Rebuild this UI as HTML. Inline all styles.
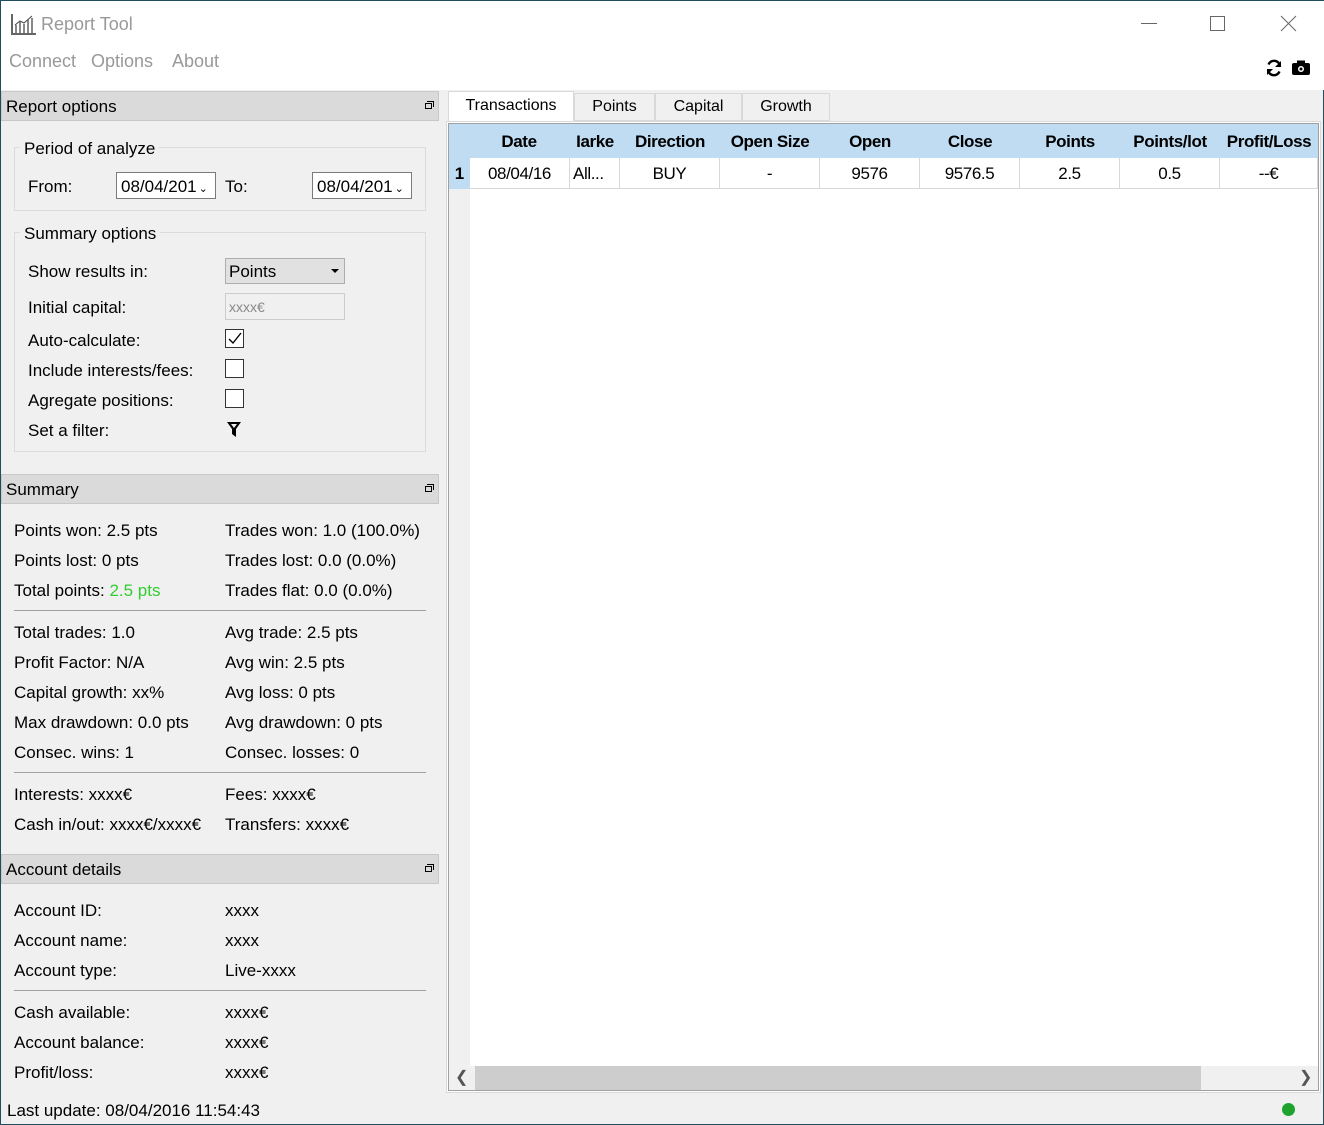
<!DOCTYPE html>
<html><head><style>
*{margin:0;padding:0;box-sizing:border-box}
body{width:1324px;height:1125px;background:#f0f0f0;font-family:"Liberation Sans",sans-serif;font-size:17px;color:#000;position:relative;overflow:hidden;border:1px solid #1f4f5f}
.a{position:absolute;white-space:nowrap}
.hdr{position:absolute;left:0px;width:438px;height:30px;background:#dadada;border:1px solid #c8c8c8}
.hdr span{position:absolute;left:4px;top:5px}
.hdr i{position:absolute;right:6px;top:11px;width:7px;height:6px;border:1.5px solid #000}
.hdr b{position:absolute;right:4px;top:9px;width:7px;height:6px;border-top:1.5px solid #000;border-right:1.5px solid #000}
.grp{position:absolute;left:13px;width:412px;border:1px solid #dcdcdc}
.cb{position:absolute;width:19px;height:19px;border:1px solid #333;background:#fff}
.hr{position:absolute;left:13px;width:412px;height:1px;background:#a0a0a0}
.th,.td{position:absolute;text-align:center;overflow:hidden}
.th{top:124px;height:33px;line-height:33px;font-weight:bold;font-size:17px;letter-spacing:-0.4px}
.td{top:157px;height:31px;line-height:31px;border-right:1px solid #d8d8d8;border-bottom:1px solid #d8d8d8;font-size:17px;letter-spacing:-0.4px}
</style></head><body>
<div class="a" style="left:0;top:0;width:1324px;height:89px;background:#fff"></div>
<svg class="a" style="left:10px;top:12px" width="26" height="22"><path d="M1 1V21H25" stroke="#666" stroke-width="2" fill="none"/><path d="M5 20V12M9 20V9M13 20V11M17 20V7M21 20V5" stroke="#888" stroke-width="2"/><path d="M4 12L9 8L13 10L21 3" stroke="#444" fill="none"/></svg>
<div class="a" style="left:40px;top:13px;font-size:18px;color:#999">Report Tool</div>
<div class="a" style="left:8px;top:50px;font-size:18px;color:#999">Connect</div>
<div class="a" style="left:90px;top:50px;font-size:18px;color:#999">Options</div>
<div class="a" style="left:171px;top:50px;font-size:18px;color:#999">About</div>
<div class="a" style="left:1140px;top:22px;width:16px;height:1px;background:#666"></div>
<div class="a" style="left:1209px;top:15px;width:15px;height:15px;border:1px solid #666"></div>
<svg class="a" style="left:1279px;top:14px" width="17" height="17"><path d="M1 1L16 16M16 1L1 16" stroke="#666"/></svg>
<svg class="a" style="left:1264px;top:58px" width="18" height="18" viewBox="0 0 18 18"><path d="M15 7A6 6 0 0 0 3.5 5.5M3 11A6 6 0 0 0 14.5 12.5" stroke="#000" stroke-width="2.4" fill="none"/><path d="M16 2V8H10Z M2 16V10H8Z" fill="#000"/></svg>
<svg class="a" style="left:1291px;top:59px" width="18" height="15"><rect x="0" y="3" width="18" height="12" rx="2" fill="#000"/><rect x="5" y="0.5" width="8" height="4" fill="#000"/><circle cx="9" cy="9" r="3" fill="#fff"/><circle cx="9" cy="9" r="1.5" fill="#000"/></svg>

<div class="hdr" style="top:90px"><span>Report options</span><b></b><i></i></div>
<div class="grp" style="top:146px;height:64px"></div>
<div class="a" style="left:19px;top:138px;background:#f0f0f0;padding:0 4px">Period of analyze</div>
<div class="a" style="left:27px;top:176px">From:</div>
<div class="a" style="left:115px;top:171px;width:100px;height:27px;border:1px solid #7a7a7a;background:#fff;padding:4px 0 0 4px">08/04/201<span style="font-size:11px;margin-left:2px">&#8964;</span></div>
<div class="a" style="left:224px;top:176px">To:</div>
<div class="a" style="left:311px;top:171px;width:100px;height:27px;border:1px solid #7a7a7a;background:#fff;padding:4px 0 0 4px">08/04/201<span style="font-size:11px;margin-left:2px">&#8964;</span></div>
<div class="grp" style="top:231px;height:220px"></div>
<div class="a" style="left:19px;top:223px;background:#f0f0f0;padding:0 4px">Summary options</div>
<div class="a" style="left:27px;top:261px">Show results in:</div>
<div class="a" style="left:224px;top:257px;width:120px;height:26px;border:1px solid #adadad;background:#e1e1e1;padding:3px 0 0 3px">Points<span style="position:absolute;right:5px;top:10px;border:4px solid transparent;border-top:4px solid #000;border-bottom:0"></span></div>
<div class="a" style="left:27px;top:297px">Initial capital:</div>
<div class="a" style="left:224px;top:292px;width:120px;height:27px;border:1px solid #ccc;background:#f0f0f0;color:#888;padding:5px 0 0 3px;font-size:14px">xxxx€</div>
<div class="a" style="left:27px;top:330px">Auto-calculate:</div>
<div class="cb" style="left:224px;top:328px"><svg width="17" height="17"><path d="M3 9L7 13L15 3" stroke="#000" stroke-width="1.4" fill="none"/></svg></div>
<div class="a" style="left:27px;top:360px">Include interests/fees:</div>
<div class="cb" style="left:224px;top:358px"></div>
<div class="a" style="left:27px;top:390px">Agregate positions:</div>
<div class="cb" style="left:224px;top:388px"></div>
<div class="a" style="left:27px;top:420px">Set a filter:</div>
<svg class="a" style="left:225px;top:420px" width="16" height="17"><path d="M1 1H15L10 8V16L6 13V8Z" fill="#000"/><path d="M5 3H11L8 7Z" fill="#f0f0f0"/></svg>

<div class="hdr" style="top:473px"><span>Summary</span><b></b><i></i></div>
<div class="a" style="left:13px;top:520px">Points won: 2.5 pts</div><div class="a" style="left:224px;top:520px">Trades won: 1.0 (100.0%)</div>
<div class="a" style="left:13px;top:550px">Points lost: 0 pts</div><div class="a" style="left:224px;top:550px">Trades lost: 0.0 (0.0%)</div>
<div class="a" style="left:13px;top:580px">Total points: <span style="color:#3c3">2.5 pts</span></div><div class="a" style="left:224px;top:580px">Trades flat: 0.0 (0.0%)</div>
<div class="hr" style="top:609px"></div>
<div class="a" style="left:13px;top:622px">Total trades: 1.0</div><div class="a" style="left:224px;top:622px">Avg trade: 2.5 pts</div>
<div class="a" style="left:13px;top:652px">Profit Factor: N/A</div><div class="a" style="left:224px;top:652px">Avg win: 2.5 pts</div>
<div class="a" style="left:13px;top:682px">Capital growth: xx%</div><div class="a" style="left:224px;top:682px">Avg loss: 0 pts</div>
<div class="a" style="left:13px;top:712px">Max drawdown: 0.0 pts</div><div class="a" style="left:224px;top:712px">Avg drawdown: 0 pts</div>
<div class="a" style="left:13px;top:742px">Consec. wins: 1</div><div class="a" style="left:224px;top:742px">Consec. losses: 0</div>
<div class="hr" style="top:771px"></div>
<div class="a" style="left:13px;top:784px">Interests: xxxx€</div><div class="a" style="left:224px;top:784px">Fees: xxxx€</div>
<div class="a" style="left:13px;top:814px">Cash in/out: xxxx€/xxxx€</div><div class="a" style="left:224px;top:814px">Transfers: xxxx€</div>

<div class="hdr" style="top:853px"><span>Account details</span><b></b><i></i></div>
<div class="a" style="left:13px;top:900px">Account ID:</div><div class="a" style="left:224px;top:900px">xxxx</div>
<div class="a" style="left:13px;top:930px">Account name:</div><div class="a" style="left:224px;top:930px">xxxx</div>
<div class="a" style="left:13px;top:960px">Account type:</div><div class="a" style="left:224px;top:960px">Live-xxxx</div>
<div class="hr" style="top:989px"></div>
<div class="a" style="left:13px;top:1002px">Cash available:</div><div class="a" style="left:224px;top:1002px">xxxx€</div>
<div class="a" style="left:13px;top:1032px">Account balance:</div><div class="a" style="left:224px;top:1032px">xxxx€</div>
<div class="a" style="left:13px;top:1062px">Profit/loss:</div><div class="a" style="left:224px;top:1062px">xxxx€</div>
<div class="a" style="left:6px;top:1100px">Last update: 08/04/2016 11:54:43</div>
<div class="a" style="left:1281px;top:1102px;width:13px;height:13px;border-radius:50%;background:#1fa32f"></div>

<div class="a" style="left:447px;top:90px;width:126px;height:30px;background:#fff;border:1px solid #d9d9d9;border-bottom:none;text-align:center;line-height:28px;font-size:16px">Transactions</div>
<div class="a" style="left:573px;top:92px;width:81px;height:28px;border:1px solid #d9d9d9;text-align:center;line-height:26px;font-size:16px">Points</div>
<div class="a" style="left:654px;top:92px;width:87px;height:28px;border:1px solid #d9d9d9;text-align:center;line-height:26px;font-size:16px">Capital</div>
<div class="a" style="left:741px;top:92px;width:88px;height:28px;border:1px solid #d9d9d9;text-align:center;line-height:26px;font-size:16px">Growth</div>
<div class="a" style="left:445px;top:120px;width:875px;height:972px;background:#fff;border:1px solid #d9d9d9"></div>
<div class="a" style="left:447px;top:122px;width:871px;height:968px;background:#fff;border:1px solid #a0a0a0"></div>
<div class="a" style="left:448px;top:123px;width:21px;height:942px;background:#f0f0f0"></div>
<div class="a" style="left:448px;top:123px;width:869px;height:34px;background:#bfdcf2"></div>
<div class="a" style="left:448px;top:157px;width:21px;height:31px;background:#bfdcf2;font-weight:bold;line-height:31px;text-align:center;font-size:17px">1</div>
<div class="th" style="left:469px;width:98px">Date</div>
<div class="th" style="left:569px;width:50px">Iarke</div>
<div class="th" style="left:619px;width:100px">Direction</div>
<div class="th" style="left:719px;width:100px">Open Size</div>
<div class="th" style="left:819px;width:100px">Open</div>
<div class="th" style="left:919px;width:100px">Close</div>
<div class="th" style="left:1019px;width:100px">Points</div>
<div class="th" style="left:1119px;width:100px">Points/lot</div>
<div class="th" style="left:1219px;width:98px">Profit/Loss</div>
<div class="td" style="left:469px;width:100px">08/04/16</div>
<div class="td" style="left:569px;width:50px;text-align:left;padding-left:3px">All...</div>
<div class="td" style="left:619px;width:100px">BUY</div>
<div class="td" style="left:719px;width:100px">-</div>
<div class="td" style="left:819px;width:100px">9576</div>
<div class="td" style="left:919px;width:100px">9576.5</div>
<div class="td" style="left:1019px;width:100px">2.5</div>
<div class="td" style="left:1119px;width:100px">0.5</div>
<div class="td" style="left:1219px;width:98px">--€</div>
<div class="a" style="left:448px;top:1065px;width:869px;height:24px;background:#f0f0f0"></div>
<div class="a" style="left:474px;top:1065px;width:726px;height:24px;background:#cdcdcd"></div>
<div class="a" style="left:454px;top:1066px;font-size:16px;color:#555">&#10094;</div>
<div class="a" style="left:1298px;top:1066px;font-size:16px;color:#555">&#10095;</div>
</body></html>
